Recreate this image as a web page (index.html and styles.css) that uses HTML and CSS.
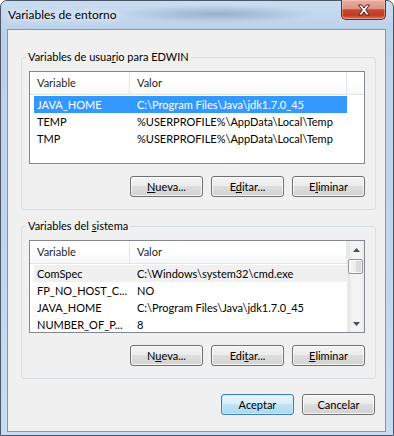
FILE: index.html
```html
<!DOCTYPE html>
<html lang="es">
<head>
<meta charset="utf-8">
<title>Variables de entorno</title>
<link rel="stylesheet" href="styles.css">
</head>
<body>
<div class="window">
  <div class="titlebar">
    <span class="title">Variables de entorno</span>
    <div class="close">
      <svg width="14" height="12" viewBox="0 0 14 12"><path d="M1.5 1h3.2L7 4.1 9.3 1h3.2L8.7 6l3.8 5H9.3L7 7.9 4.7 11H1.5l3.8-5z" fill="#fff" stroke="#5a1a12" stroke-width="1" stroke-linejoin="round"/></svg>
    </div>
  </div>
  <div class="client">
    <fieldset class="group">
      <legend>Variables de usua<u>r</u>io para EDWIN</legend>
      <div class="list">
        <div class="lmain">
          <div class="lhead">
            <div class="hc hc1">Variable</div>
            <div class="hc hc2">Valor</div>
            <div class="hfill"></div>
          </div>
          <div class="rows">
            <div class="row sel"><div class="rc1">JAVA_HOME</div><div class="rc2">C:\Program Files\Java\jdk1.7.0_45</div></div>
            <div class="row"><div class="rc1">TEMP</div><div class="rc2">%USERPROFILE%\AppData\Local\Temp</div></div>
            <div class="row"><div class="rc1">TMP</div><div class="rc2">%USERPROFILE%\AppData\Local\Temp</div></div>
          </div>
        </div>
      </div>
      <div class="btns">
        <button class="btn"><u>N</u>ueva...</button>
        <button class="btn">E<u>d</u>itar...</button>
        <button class="btn">E<u>l</u>iminar</button>
      </div>
    </fieldset>
    <fieldset class="group group2">
      <legend>Variables del <u>s</u>istema</legend>
      <div class="list">
        <div class="lmain">
          <div class="lhead">
            <div class="hc hc1">Variable</div>
            <div class="hc hc2">Valor</div>
          </div>
          <div class="rows">
            <div class="row inact"><div class="rc1">ComSpec</div><div class="rc2">C:\Windows\system32\cmd.exe</div></div>
            <div class="row"><div class="rc1">FP_NO_HOST_C...</div><div class="rc2">NO</div></div>
            <div class="row"><div class="rc1">JAVA_HOME</div><div class="rc2">C:\Program Files\Java\jdk1.7.0_45</div></div>
            <div class="row"><div class="rc1">NUMBER_OF_P...</div><div class="rc2">8</div></div>
          </div>
        </div>
        <div class="vscroll">
          <div class="sbtn"><svg width="7" height="4" viewBox="0 0 7 4"><path d="M0 4L3.5 0 7 4z" fill="#4d4d4d"/></svg></div>
          <div class="track"><div class="thumb"></div></div>
          <div class="sbtn"><svg width="7" height="4" viewBox="0 0 7 4"><path d="M0 0h7L3.5 4z" fill="#4d4d4d"/></svg></div>
        </div>
      </div>
      <div class="btns">
        <button class="btn">N<u>u</u>eva...</button>
        <button class="btn">Edi<u>t</u>ar...</button>
        <button class="btn"><u>E</u>liminar</button>
      </div>
    </fieldset>
    <div class="dlgbtns">
      <button class="btn default">Aceptar</button>
      <button class="btn">Cancelar</button>
    </div>
  </div>
</div>
</body>
</html>
```
FILE: styles.css
```css
* { box-sizing: border-box; }
html, body { margin: 0; padding: 0; }
body {
  width: 394px;
  height: 436px;
  overflow: hidden;
  background: #ffffff;
  font-family: Lato, "Noto Sans", sans-serif;
  font-size: 11px;
  color: #000;
}
.window {
  width: 394px;
  height: 436px;
  border: 1px solid #4a5766;
  border-radius: 7px 7px 0 0;
  padding: 0 7px 3px 6px;
  display: flex;
  flex-direction: column;
  background: linear-gradient(180deg, #cadcf1 0, #bcd2eb 28px, #c1d6ee 60%, #c9dcf1 100%);
}
.titlebar {
  height: 28px;
  flex: none;
  display: flex;
  align-items: flex-start;
  padding-left: 1px;
  background: radial-gradient(ellipse 100px 9px at 210px 13px, rgba(80, 100, 135, 0.35), rgba(80, 100, 135, 0) 100%);
}
.title {
  font-size: 12px;
  line-height: 16px;
  margin-top: 6px;
  text-shadow: 0 0 6px #fff, 0 0 10px #fff;
}
.close {
  margin-left: auto;
  margin-top: -1px;
  width: 45px;
  height: 20px;
  border: 1px solid #6b2a22;
  border-top: none;
  border-radius: 0 0 5px 5px;
  background: linear-gradient(180deg, #e9b0a4 0%, #dc9382 45%, #c8482f 52%, #c13a23 80%, #d97a5c 100%);
  box-shadow: inset 0 0 0 1px rgba(255, 210, 200, 0.45);
  display: flex;
  align-items: center;
  justify-content: center;
}
.client {
  flex: 1;
  border: 1px solid #8497b0;
  background: #f0f0f0;
  display: flex;
  flex-direction: column;
}
.group {
  margin: 19px 9px 0 13px;
  padding: 6px 10px 12px 7px;
  border: 1px solid #d5dfe5;
  border-radius: 3px;
  min-width: 0;
}
.group2 { margin-top: 8px; }
legend {
  padding: 0 2px;
  margin-left: -3px;
  line-height: 16px;
}
.list {
  height: 93px;
  border: 1px solid #828790;
  background: #fff;
  display: flex;
  overflow: hidden;
}
.lmain {
  flex: 1;
  min-width: 0;
  display: flex;
  flex-direction: column;
}
.lhead {
  height: 23px;
  flex: none;
  display: flex;
  border-bottom: 1px solid #e5e5e5;
  background: linear-gradient(180deg, #ffffff 0, #ffffff 50%, #f6f7f9 100%);
}
.hc {
  height: 22px;
  line-height: 22px;
  padding-left: 7px;
  border-right: 1px solid #e3e8ee;
  color: #1e1e1e;
}
.hc1 { width: 100px; }
.hc2 { width: 217px; }
.hfill { flex: 1; }
.rows { padding-top: 1px; }
.row {
  display: flex;
  margin-left: 4px;
  width: 313px;
  height: 17px;
  line-height: 17px;
  white-space: nowrap;
}
.rc1 { width: 96px; padding-left: 3px; overflow: hidden; }
.rc2 { width: 217px; padding-left: 7px; overflow: hidden; }
.sel { background: #3399ff; color: #fff; }
.inact { background: #f0f0f0; }
.vscroll {
  width: 17px;
  flex: none;
  display: flex;
  flex-direction: column;
  background: linear-gradient(90deg, #e4e4e4 0, #f3f3f3 25%, #f3f3f3 75%, #ececec 100%);
  border-left: 1px solid #ececec;
}
.sbtn {
  height: 17px;
  flex: none;
  display: flex;
  align-items: center;
  justify-content: center;
}
.track { flex: 1; }
.thumb {
  margin: 1px 1px 0 0;
  height: 15px;
  border: 1px solid #979797;
  border-radius: 2px;
  background: linear-gradient(90deg, #f6f6f6 0, #ececec 50%, #dcdcdc 51%, #d8d8d8 100%);
  box-shadow: inset 0 0 0 1px rgba(255, 255, 255, 0.7);
}
.btns {
  display: flex;
  justify-content: flex-end;
  gap: 8px;
  margin-top: 12px;
}
.btn {
  width: 73px;
  height: 21px;
  border: 1px solid #707070;
  border-radius: 3px;
  background: linear-gradient(180deg, #f4f4f4 0, #ececec 45%, #dedede 50%, #d2d2d2 100%);
  box-shadow: inset 0 0 0 1px rgba(255, 255, 255, 0.75);
  font: inherit;
  color: #000;
  padding: 0;
  line-height: 19px;
  text-align: center;
}
.btn.default {
  border-color: #3c7fb1;
  background: linear-gradient(180deg, #e9f5fc 0, #d9eefa 45%, #c0e3f8 50%, #acd8f3 100%);
  box-shadow: inset 0 0 0 1px rgba(200, 235, 252, 0.9);
}
.dlgbtns {
  display: flex;
  justify-content: flex-end;
  gap: 8px;
  margin: 15px 10px 0 0;
}
```
